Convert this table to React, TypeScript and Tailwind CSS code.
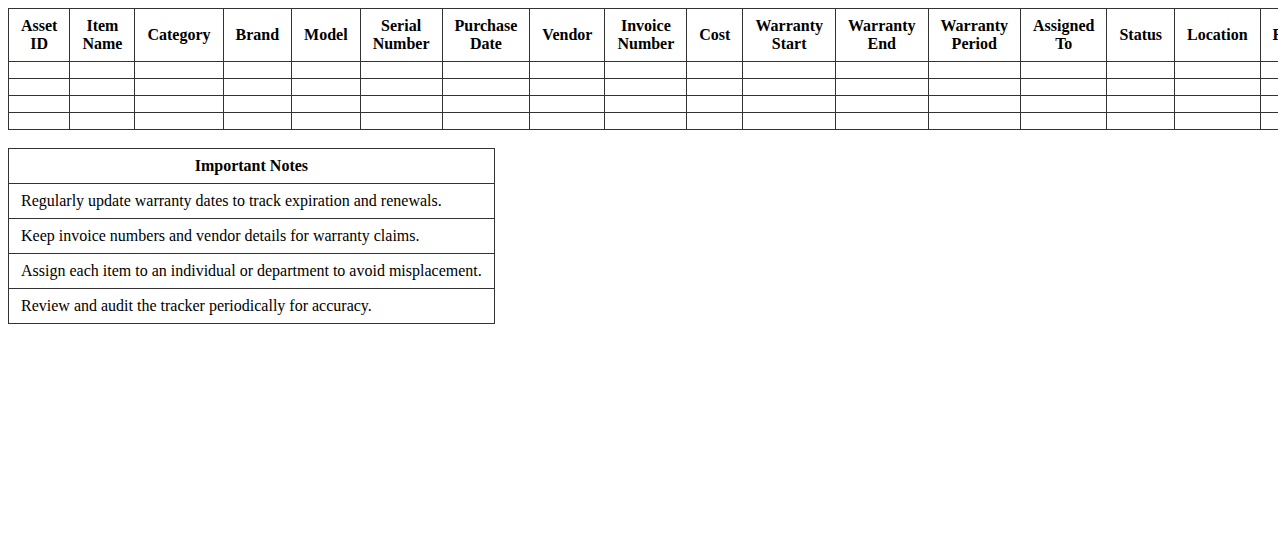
const columns = [
  ['Asset', 'ID'],
  ['Item', 'Name'],
  ['Category'],
  ['Brand'],
  ['Model'],
  ['Serial', 'Number'],
  ['Purchase', 'Date'],
  ['Vendor'],
  ['Invoice', 'Number'],
  ['Cost'],
  ['Warranty', 'Start'],
  ['Warranty', 'End'],
  ['Warranty', 'Period'],
  ['Assigned', 'To'],
  ['Status'],
  ['Location'],
  ['Remarks'],
];

const notes = [
  'Regularly update warranty dates to track expiration and renewals.',
  'Keep invoice numbers and vendor details for warranty claims.',
  'Assign each item to an individual or department to avoid misplacement.',
  'Review and audit the tracker periodically for accuracy.',
];

const App = () => {
  return (
    <div className="min-h-screen overflow-hidden bg-white p-2 font-['Liberation_Serif','Times_New_Roman',serif] text-base leading-[18px] text-black">
      <table className="w-full border-collapse">
        <thead>
          <tr>
            {columns.map((col) => (
              <th
                key={col.join(' ')}
                className="border border-[#333] px-3 py-2 text-center align-middle font-bold"
              >
                {col.join(' ')}
              </th>
            ))}
          </tr>
        </thead>
        <tbody>
          {[0, 1, 2, 3].map((row) => (
            <tr key={row}>
              {columns.map((col) => (
                <td key={col.join(' ')} className="h-[17px] border border-[#333] px-3 py-2"></td>
              ))}
            </tr>
          ))}
        </tbody>
      </table>

      <table className="mt-[18px] border-collapse">
        <thead>
          <tr>
            <th className="border border-[#333] px-3 py-2 text-center font-bold">Important Notes</th>
          </tr>
        </thead>
        <tbody>
          {notes.map((note) => (
            <tr key={note}>
              <td className="border border-[#333] px-3 py-2 text-left">{note}</td>
            </tr>
          ))}
        </tbody>
      </table>
    </div>
  );
};

export default App;
